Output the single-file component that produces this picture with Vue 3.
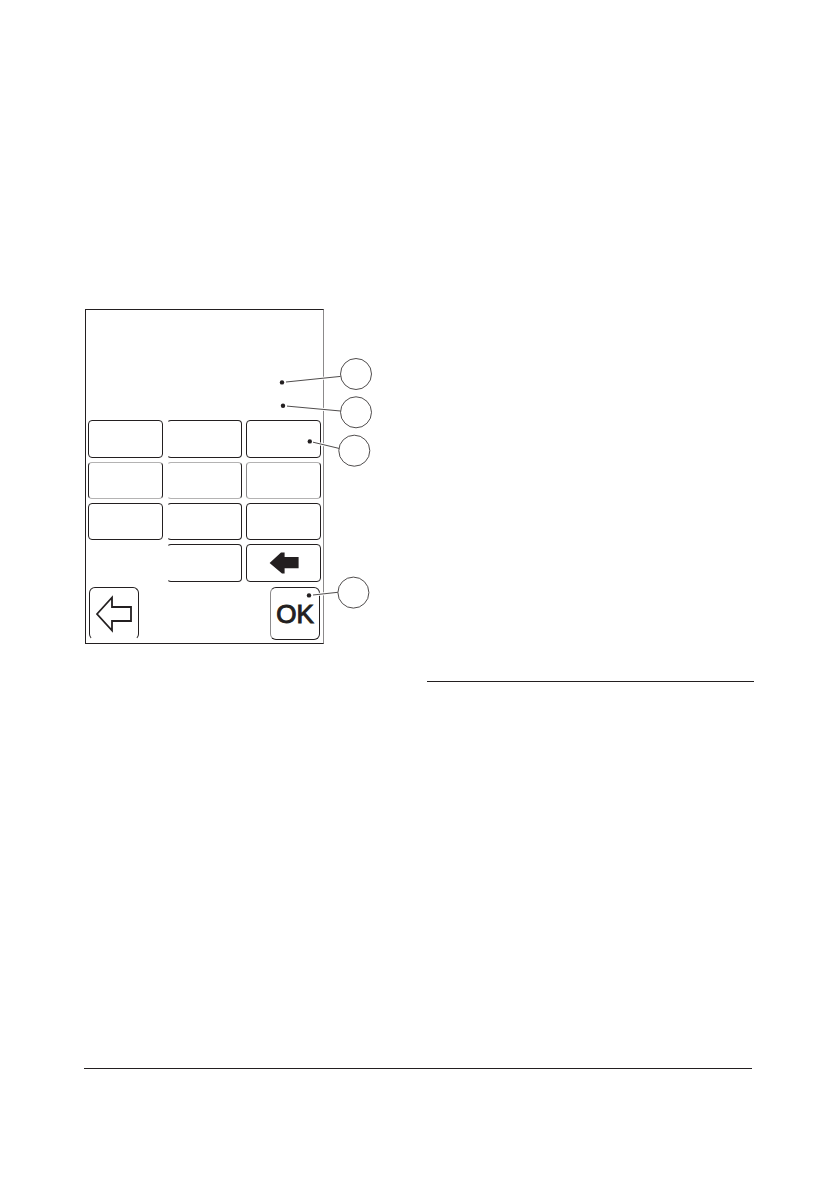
<script setup>
const keys = [1, 2, 3, 4, 5, 6, 7, 8, 9, 0]

const callouts = [
  { dot: [282, 382.4], from: [286, 382], to: [340.6, 376.4], ring: [356, 374] },
  { dot: [283, 405.8], from: [287, 406.1], to: [340.6, 411], ring: [356, 412.3] },
  { dot: [309.8, 441.4], from: [313, 442.2], to: [339, 448.4], ring: [354.3, 450.7] },
  { dot: [309, 595.4], from: [313, 595], to: [337.8, 592.3], ring: [353.4, 592.6] }
]
</script>

<template>
  <div class="page">
    <main class="columns">
      <section class="figure">
        <div class="panel">
          <div class="keys">
            <button
              v-for="key in keys"
              :key="key"
              type="button"
              class="key"
              :class="'key-' + key"
              :aria-label="String(key)"
            ></button>
            <button type="button" class="key" aria-label="Delete">
              <svg width="30" height="22" viewBox="268 552 30 22" aria-hidden="true">
                <path d="M268.6 563L280 552.6H283.6V557H297.6V568.2H283.6V573.6H281Z" fill="#231f20" />
              </svg>
            </button>
          </div>
          <div class="actions">
            <button type="button" class="action back" aria-label="Back">
              <svg width="38" height="38" viewBox="95 597 38 38" aria-hidden="true">
                <path d="M97 616L112 599.5V609H131V623H112V632.5Z" fill="none" stroke="#231f20" stroke-width="1.8" />
              </svg>
            </button>
            <button type="button" class="action ok">OK</button>
          </div>
        </div>
        <svg class="callouts" width="290" height="335" viewBox="85 309 290 335" aria-hidden="true">
          <g v-for="(c, i) in callouts" :key="i">
            <line class="halo" :x1="c.from[0]" :y1="c.from[1]" :x2="c.to[0]" :y2="c.to[1]" />
            <line class="leader" :x1="c.from[0]" :y1="c.from[1]" :x2="c.to[0]" :y2="c.to[1]" />
            <circle class="dot" :cx="c.dot[0]" :cy="c.dot[1]" r="2.2" />
            <circle class="ring" :cx="c.ring[0]" :cy="c.ring[1]" r="15.5" />
          </g>
        </svg>
      </section>
      <section class="notes">
        <hr class="rule" />
      </section>
    </main>
    <footer class="footer">
      <hr class="rule" />
    </footer>
  </div>
</template>

<style>
body {
  margin: 0;
  background: #fff;
}
</style>

<style scoped>
.page {
  box-sizing: border-box;
  min-height: 100vh;
  padding: 309px 85px 122px 84px;
  display: flex;
  flex-direction: column;
  justify-content: space-between;
  font-family: "Liberation Sans", Arial, sans-serif;
  color: #231f20;
}

.columns {
  display: grid;
  grid-template-columns: 1fr 1fr;
  column-gap: 16px;
}

.figure {
  position: relative;
  padding-left: 1px;
}

.panel {
  box-sizing: border-box;
  width: 239px;
  padding: 110px 2px 3px;
  border: 1px solid #231f20;
  border-right-color: #8c8a8b;
}

.keys {
  display: grid;
  grid-template-columns: repeat(3, 1fr);
  grid-template-rows: 38px 37px 37px 38px;
  gap: 4px;
}

.key,
.action {
  box-sizing: border-box;
  display: flex;
  align-items: center;
  justify-content: center;
  margin: 0;
  padding: 0;
  border: 1px solid #231f20;
  background: #fff;
  color: inherit;
  font-family: inherit;
}

.key {
  border-radius: 4px;
}

.key-2,
.key-5,
.key-8,
.key-0 {
  border-left-color: transparent;
}

.key-0 {
  grid-column: 2;
}

.key-4,
.key-5,
.key-6 {
  border-top-color: #b4b3b3;
  border-bottom-color: #b4b3b3;
}

.key-6 {
  border-left-color: #8c8a8b;
}

.actions {
  display: flex;
  justify-content: space-between;
  padding: 5px 1px 0;
}

.action {
  width: 50px;
  height: 53px;
  border-radius: 6px;
}

.back {
  border-bottom-color: transparent;
}

.ok {
  border-left-color: #8c8a8b;
  font-size: 26px;
  line-height: 26px;
  -webkit-text-stroke: 1px #231f20;
}

.callouts {
  position: absolute;
  top: 0;
  left: 1px;
  pointer-events: none;
}

.halo {
  stroke: #fff;
  stroke-width: 3;
}

.leader {
  stroke: #231f20;
  stroke-width: 0.8;
}

.dot {
  fill: #231f20;
}

.ring {
  fill: #fff;
  stroke: #231f20;
  stroke-width: 0.8;
}

.notes {
  padding-top: 372px;
}

.rule {
  margin: 0;
  border: 0;
  border-top: 1px solid #231f20;
}

.footer {
  padding-right: 2px;
}
</style>
